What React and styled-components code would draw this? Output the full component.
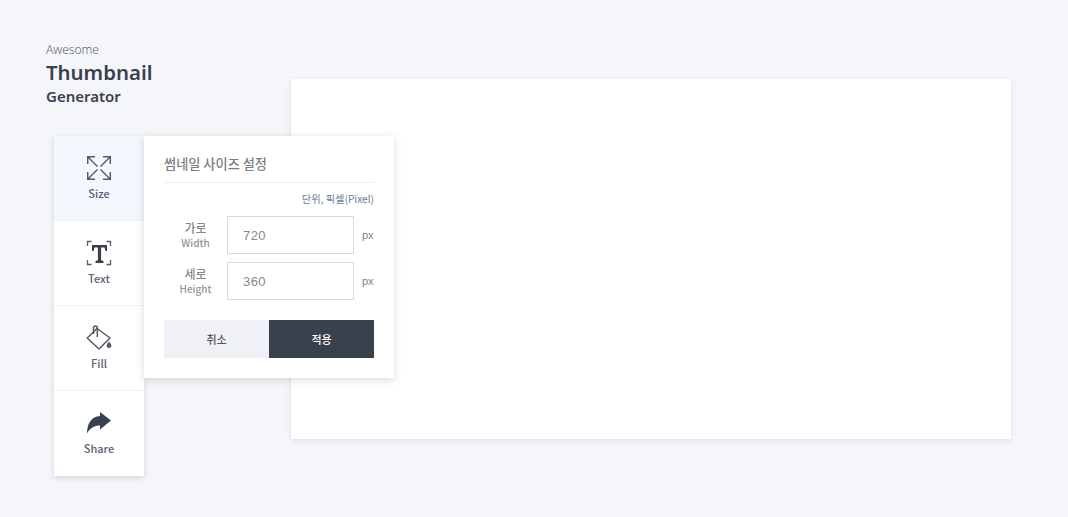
import styled, { createGlobalStyle } from "styled-components";

const GlobalStyle = createGlobalStyle`
  html, body {
    margin: 0;
    padding: 0;
    background: #f5f6fa;
  }
  body {
    font-family: "Noto Sans CJK KR", "Noto Sans", sans-serif;
    color: #3a414d;
  }
  * {
    box-sizing: border-box;
  }
`;

const Page = styled.div`
  display: flex;
  width: 1068px;
  height: 517px;
  overflow: hidden;
`;

const Side = styled.div`
  width: 291px;
  flex-shrink: 0;
  padding: 41px 0 0 46px;
`;

const Logo = styled.header`
  height: 95px;
  font-family: "Noto Sans", sans-serif;
`;

const Small = styled.div`
  font-size: 12px;
  font-weight: 300;
  line-height: 17px;
  color: #5d6470;
`;

const Big = styled.div`
  font-size: 20.400px;
  font-weight: 600;
  line-height: 29px;
  color: #3a414d;
`;

const Sub = styled.div`
  font-size: 15px;
  font-weight: 600;
  line-height: 19px;
  color: #3a414d;
`;

const Tools = styled.nav`
  position: relative;
  width: 90px;
  margin-left: 8px;
  background: #fff;
  box-shadow: 0 2px 6px rgba(60, 70, 90, 0.18);
`;

const Tool = styled.button`
  display: flex;
  flex-direction: column;
  align-items: center;
  width: 100%;
  height: 85px;
  padding: 19px 0 0;
  border: 0;
  border-bottom: ${(p) => (p.$last ? "0" : "1px solid #f0f1f5")};
  background: ${(p) => (p.$active ? "#f4f6fd" : "#fff")};
  font-family: inherit;
  cursor: pointer;
`;

const ToolIcon = styled.svg`
  width: 26px;
  height: 26px;
  display: block;
  color: #565b65;
`;

const ToolName = styled.span`
  margin-top: 4px;
  font-size: 11px;
  font-weight: 500;
  line-height: 16px;
  color: #5b6270;
`;

const Panel = styled.section`
  position: absolute;
  left: 90px;
  top: 0;
  width: 250px;
  height: 242px;
  padding: 14px 20px 0;
  background: #fff;
  box-shadow: 0 2px 8px rgba(60, 70, 90, 0.2);
`;

const PanelTitle = styled.h2`
  margin: 0;
  height: 33px;
  border-bottom: 1px solid #eff0f3;
  font-size: 13.200px;
  font-weight: 500;
  line-height: 28px;
  color: #7b7e84;
`;

const Unit = styled.p`
  margin: 0;
  padding-top: 8px;
  height: 33px;
  font-size: 10.200px;
  font-weight: 400;
  line-height: 16px;
  text-align: right;
  color: #6a7d99;
`;

const Row = styled.div`
  display: flex;
  align-items: center;
  height: 38px;
  margin-bottom: 8px;
`;

const Label = styled.label`
  width: 63px;
  text-align: center;
`;

const LabelKo = styled.div`
  font-size: 12px;
  line-height: 15px;
  color: #6a6d73;
`;

const LabelEn = styled.div`
  font-size: 10px;
  font-weight: 500;
  line-height: 15px;
  color: #93959c;
`;

const Input = styled.input`
  width: 127px;
  height: 38px;
  padding: 0 15px;
  border: 1px solid #d8d9e2;
  border-radius: 0;
  outline: 0;
  background: #fff;
  font-family: "Liberation Sans", sans-serif;
  font-size: 13px;
  letter-spacing: 0.4px;
  color: #85888e;
`;

const Px = styled.span`
  margin-left: 8px;
  font-family: "Liberation Sans", sans-serif;
  font-size: 11px;
  color: #7e828a;
`;

const Buttons = styled.div`
  display: flex;
  margin-top: 20px;
`;

const Action = styled.button`
  flex: 1;
  height: 38px;
  border: 0;
  background: ${(p) => (p.$primary ? "#39414e" : "#f0f1f6")};
  color: ${(p) => (p.$primary ? "#fff" : "#50545c")};
  font-family: inherit;
  font-size: 11px;
  font-weight: 500;
  cursor: pointer;
`;

const Main = styled.main`
  padding-top: 79px;
`;

const Canvas = styled.div`
  width: 720px;
  height: 360px;
  background: #fff;
  box-shadow: 0 2px 6px rgba(60, 70, 90, 0.12);
`;

const SizeIcon = () => (
  <ToolIcon viewBox="0 0 26 26" fill="none" stroke="currentColor" strokeWidth="1.4">
    <path d="M1.700 9V1.700H9M1.700 1.700l9.800 9.800M24.300 9V1.700H17M24.300 1.700l-9.800 9.800M1.700 17v7.300H9M1.700 24.300l9.800-9.800M24.300 17v7.300H17M24.300 24.300l-9.800-9.800" />
  </ToolIcon>
);

const TextIcon = () => (
  <ToolIcon viewBox="0 0 26 26" fill="none">
    <path stroke="currentColor" strokeWidth="1.300" d="M1.500 6V1.500H5.500M20.500 1.500h4V6M1.500 20v4.500h4M20.500 24.500h4V20" />
    <path fill="#3a404a" d="M6 5h15v6h-1.500l-1-3.400h-3.400v12.600l2.400.8V23H9.500v-2l2.400-.8V7.600H8.500l-1 3.400H6z" />
  </ToolIcon>
);

const FillIcon = () => (
  <ToolIcon viewBox="0 0 26 26" fill="none" stroke="currentColor" strokeWidth="1.500">
    <path d="M11 3.500 24 13 13 24 1.200 13z" strokeLinejoin="round" />
    <path d="M7.500 9V3a1.900 1.900 0 0 1 3.800 0v9" />
    <path fill="currentColor" stroke="none" d="M23 16.500s2.400 2.800 2.400 4.200a2.400 2.400 0 0 1-4.800 0c0-1.400 2.400-4.200 2.400-4.200z" />
  </ToolIcon>
);

const ShareIcon = () => (
  <ToolIcon viewBox="0 0 26 26">
    <path fill="#39414e" d="M14 2 25 10.500 14 19.500v-4C8.500 15.500 4 18 1 23.500 1 13.500 5.500 6.500 14 6z" />
  </ToolIcon>
);

const App = () => {
  return (
    <Page>
      <GlobalStyle />
      <Side>
        <Logo>
          <Small>Awesome</Small>
          <Big>Thumbnail</Big>
          <Sub>Generator</Sub>
        </Logo>
        <Tools>
          <Tool $active>
            <SizeIcon />
            <ToolName>Size</ToolName>
          </Tool>
          <Tool>
            <TextIcon />
            <ToolName>Text</ToolName>
          </Tool>
          <Tool>
            <FillIcon />
            <ToolName>Fill</ToolName>
          </Tool>
          <Tool $last>
            <ShareIcon />
            <ToolName>Share</ToolName>
          </Tool>
          <Panel>
            <PanelTitle>썸네일 사이즈 설정</PanelTitle>
            <Unit>단위, 픽셀(Pixel)</Unit>
            <Row>
              <Label>
                <LabelKo>가로</LabelKo>
                <LabelEn>Width</LabelEn>
              </Label>
              <Input defaultValue="720" />
              <Px>px</Px>
            </Row>
            <Row>
              <Label>
                <LabelKo>세로</LabelKo>
                <LabelEn>Height</LabelEn>
              </Label>
              <Input defaultValue="360" />
              <Px>px</Px>
            </Row>
            <Buttons>
              <Action>취소</Action>
              <Action $primary>적용</Action>
            </Buttons>
          </Panel>
        </Tools>
      </Side>
      <Main>
        <Canvas />
      </Main>
    </Page>
  );
};

export default App;
